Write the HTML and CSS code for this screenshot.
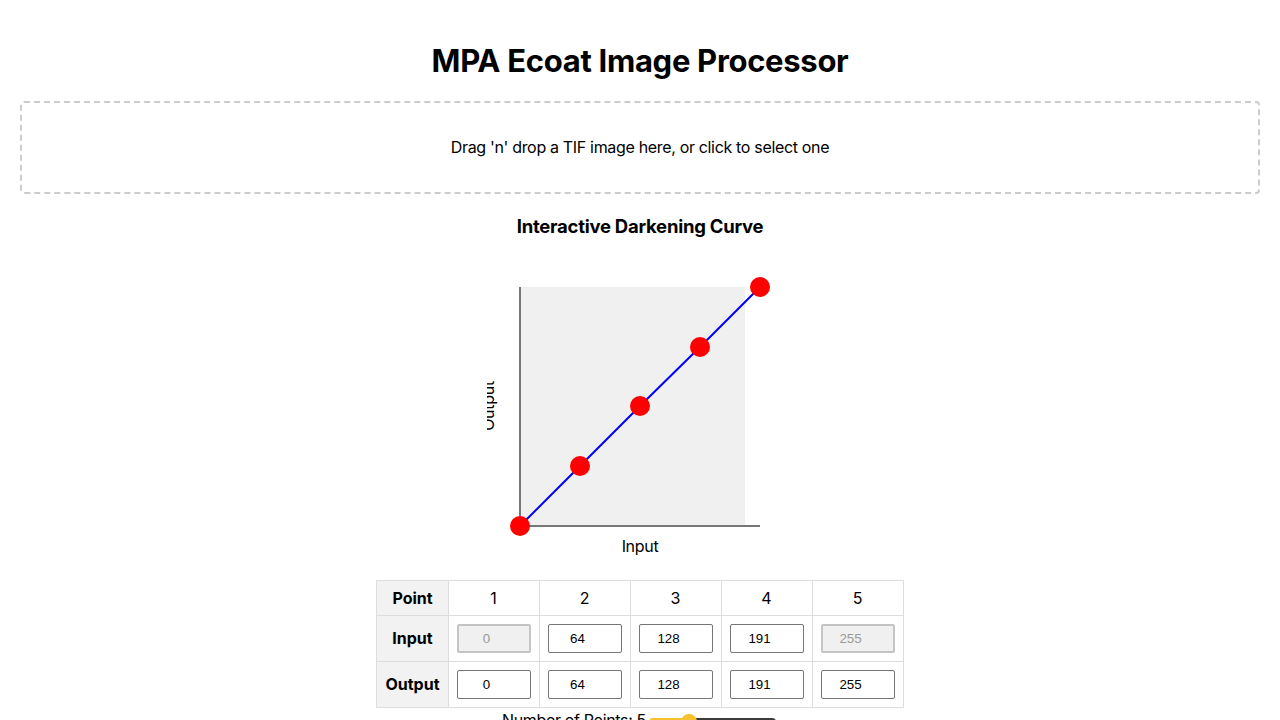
FILE: index.html
```html
<!DOCTYPE html>
<html lang="en">
<head>
<meta charset="utf-8">
<title>MPA Ecoat Image Processor</title>
<link rel="stylesheet" href="styles.css">
</head>
<body>
<div class="app">
  <h1 class="title">MPA Ecoat Image Processor</h1>
  <div class="dropzone">Drag 'n' drop a TIF image here, or click to select one</div>
  <h3 class="curve-title">Interactive Darkening Curve</h3>
  <svg class="curve" width="306" height="300" viewBox="0 0 306 300">
    <rect x="33" y="30" width="225" height="239" fill="#f0f0f0"/>
    <line x1="33" y1="30" x2="33" y2="270" stroke="#777" stroke-width="2"/>
    <line x1="32" y1="269" x2="273" y2="269" stroke="#777" stroke-width="2"/>
    <polyline points="33,269 93,209 153,149 213,90 273,30" fill="none" stroke="#0000ff" stroke-width="2"/>
    <circle cx="33" cy="269" r="10" fill="#ff0000"/>
    <circle cx="93" cy="209" r="10" fill="#ff0000"/>
    <circle cx="153" cy="149" r="10" fill="#ff0000"/>
    <circle cx="213" cy="90" r="10" fill="#ff0000"/>
    <circle cx="273" cy="30" r="10" fill="#ff0000"/>
    <text x="153" y="295" text-anchor="middle" class="axis-label">Input</text>
    <text transform="translate(7,149) rotate(-90)" text-anchor="middle" class="axis-label">Output</text>
  </svg>
  <table class="points">
    <tr class="head-row">
      <th>Point</th>
      <td>1</td><td>2</td><td>3</td><td>4</td><td>5</td>
    </tr>
    <tr>
      <th>Input</th>
      <td><input class="num" type="text" value="0" disabled></td>
      <td><input class="num" type="text" value="64"></td>
      <td><input class="num" type="text" value="128"></td>
      <td><input class="num" type="text" value="191"></td>
      <td><input class="num" type="text" value="255" disabled></td>
    </tr>
    <tr>
      <th>Output</th>
      <td><input class="num" type="text" value="0"></td>
      <td><input class="num" type="text" value="64"></td>
      <td><input class="num" type="text" value="128"></td>
      <td><input class="num" type="text" value="191"></td>
      <td><input class="num" type="text" value="255"></td>
    </tr>
  </table>
  <div class="count-row">
    <label class="count-label" for="npts">Number of Points: 5</label>
    <input id="npts" class="slider" type="range" min="3" max="10" value="5">
  </div>
</div>
</body>
</html>
```
FILE: styles.css
```css
html, body {
  margin: 0;
  padding: 0;
  background: #fff;
}
body {
  font-family: Inter, "Noto Sans", sans-serif;
  color: #000;
}
.app {
  padding: 0 20px;
  display: flex;
  flex-direction: column;
  align-items: center;
}
.title {
  margin: 41px 0 21px;
  font-size: 31px;
  line-height: 39px;
  font-weight: 700;
  letter-spacing: -0.3px;
  text-align: center;
}
.dropzone {
  align-self: stretch;
  border: 2px dashed #cccccc;
  border-radius: 4px;
  padding: 35px 0 35px;
  font-size: 16px;
  line-height: 19px;
  letter-spacing: -0.33px;
  text-align: center;
}
.curve-title {
  margin: 21px 0 20px;
  font-size: 18.5px;
  line-height: 22px;
  font-weight: 700;
  letter-spacing: -0.25px;
}
.curve {
  display: block;
}
.axis-label {
  font-family: Inter, "Noto Sans", sans-serif;
  font-size: 16px;
  letter-spacing: -0.3px;
  fill: #000;
}
.points {
  margin-top: 23px;
  border-collapse: collapse;
  font-size: 16px;
}
.points th,
.points td {
  border: 1px solid #dddddd;
  padding: 8px;
  text-align: center;
  line-height: 17px;
}
.points .head-row th,
.points .head-row td {
  padding-top: 9px;
}
.points th {
  background: #f2f2f2;
  font-weight: 700;
}
.num {
  box-sizing: border-box;
  width: 74px;
  height: 29px;
  margin: 0;
  display: block;
  border: 1px solid #767676;
  border-radius: 2px;
  padding: 0 16px 0 2px;
  font-family: "Liberation Sans", Arial, sans-serif;
  font-size: 13.33px;
  text-align: center;
  color: #000;
  background: #fff;
}
.num:disabled {
  border: 2px solid #c4c4c4;
  background: #f0f0f0;
  color: #9a9a9a;
}
.count-row {
  display: flex;
  align-items: center;
  gap: 3px;
  margin-top: 1px;
  margin-right: 2px;
}
.count-label {
  font-size: 16px;
  line-height: 22px;
  letter-spacing: -0.35px;
}
.slider {
  -webkit-appearance: none;
  appearance: none;
  width: 127px;
  height: 8px;
  margin: 4px 0 0;
  border-radius: 4px;
  background: linear-gradient(to right, #f9c12e 0 31%, #3c3c3c 31% 100%);
  outline: none;
}
.slider::-webkit-slider-thumb {
  -webkit-appearance: none;
  appearance: none;
  width: 16px;
  height: 16px;
  border-radius: 50%;
  background: #f9c12e;
  border: none;
}
```
